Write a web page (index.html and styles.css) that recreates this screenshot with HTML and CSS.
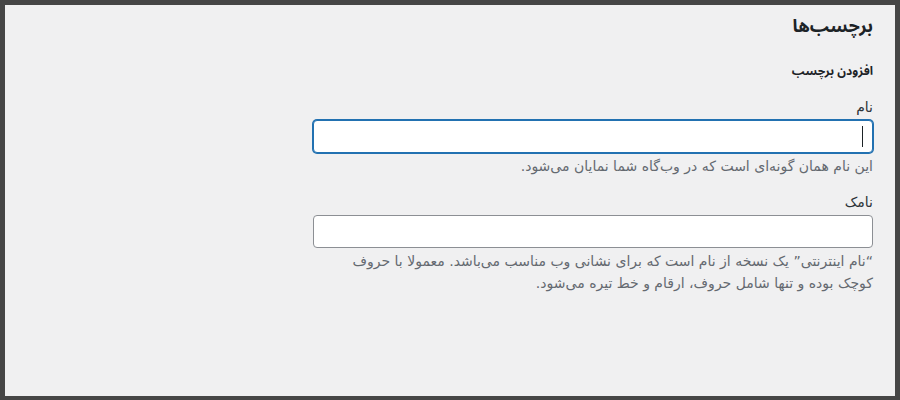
FILE: index.html
```html
<!DOCTYPE html>
<html lang="fa" dir="rtl">
<head>
    <meta charset="UTF-8">
    <meta name="viewport" content="width=device-width, initial-scale=1.0">
    <title>برچسب‌ها</title>
    <link rel="stylesheet" href="styles.css">
</head>
<body>
    <div class="frame">
        <div class="wrap">
            <h1>برچسب‌ها</h1>
            <h2>افزودن برچسب</h2>
            <div class="form-field">
                <label for="tag-name">نام</label>
                <div class="input-box">
                    <input type="text" class="input-field focused" id="tag-name">
                    <span class="caret"></span>
                </div>
                <p class="help">این نام همان گونه‌ای است که در وب‌گاه شما نمایان می‌شود.</p>
            </div>
            <div class="form-field">
                <label for="tag-slug">نامک</label>
                <div class="input-box">
                    <input type="text" class="input-field" id="tag-slug">
                </div>
                <p class="help">“نام اینترنتی” یک نسخه از نام است که برای نشانی وب مناسب می‌باشد. معمولا با حروف کوچک بوده و تنها شامل حروف، ارقام و خط تیره می‌شود.</p>
            </div>
        </div>
    </div>
</body>
</html>
```

FILE: styles.css
```css
body {
    margin: 0;
    background-color: #464646;
    font-family: 'DejaVu Sans', sans-serif;
    color: #1d2327;
}

.frame {
    box-sizing: border-box;
    height: 400px;
    border-style: solid;
    border-color: #464646;
    border-width: 5px 5px 4px 5px;
    background-color: #f0f0f1;
}

.wrap {
    width: 560px;
    padding: 0 22px 0 0;
}

h1 {
    font-family: 'Noto Sans Arabic', 'DejaVu Sans', sans-serif;
    font-size: 18px;
    font-weight: 700;
    margin: 6px 0 0;
    line-height: 30px;
}

h2 {
    font-family: 'Noto Sans Arabic', 'DejaVu Sans', sans-serif;
    font-size: 12px;
    font-weight: 700;
    margin: 21px 0 0;
    line-height: 20px;
}

.form-field {
    margin-top: 15px;
}

.form-field + .form-field {
    margin-top: 15px;
}

label {
    display: block;
    font-size: 14px;
    color: #2c3338;
    line-height: 20px;
    margin-bottom: 3px;
}

.input-box {
    position: relative;
}

.input-field {
    box-sizing: border-box;
    display: block;
    width: 560px;
    height: 33px;
    margin: 0;
    padding: 0 8px;
    background-color: #fff;
    border: 1px solid #8c8f94;
    border-radius: 4px;
    font-family: inherit;
    font-size: 14px;
    outline: none;
}

.input-field.focused {
    border-color: #2271b1;
    box-shadow: 0 0 0 1px #2271b1;
}

.caret {
    position: absolute;
    top: 6px;
    right: 10px;
    width: 1px;
    height: 21px;
    background-color: #1d2327;
}

.help {
    margin: 2px 0 0;
    font-size: 14px;
    line-height: 22px;
    color: #646970;
}
```
